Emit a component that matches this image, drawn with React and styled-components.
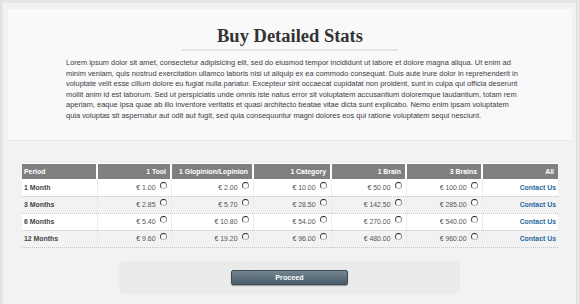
import React from 'react';
import styled, { createGlobalStyle } from 'styled-components';

const Global = createGlobalStyle`
  html, body { margin: 0; padding: 0; }
  body {
    background-color: #e4e4e4;
    background-image: repeating-linear-gradient(90deg, #dfdfdf 0 1px, #e8e8e8 1px 3px);
    font-family: "Liberation Sans", Arial, sans-serif;
  }
`;

const Page = styled.div`
  width: 580px;
  height: 304px;
  box-sizing: border-box;
  padding: 3px 4px 0 3px;
  overflow: hidden;
`;

const Wrap = styled.div`
  background: #f2f2f2;
  height: 100%;
  box-sizing: border-box;
  padding: 6px 4px 0 5px;
`;

const Intro = styled.section`
  background: #f9f9f9;
  height: 132px;
  box-sizing: border-box;
  border-bottom: 1px dotted #d8d8d8;
  padding-top: 16px;
  text-align: center;
`;

const Title = styled.h1`
  display: inline-block;
  margin: 0;
  padding: 0 35px 2px;
  font-family: "Liberation Serif", Georgia, serif;
  font-weight: bold;
  font-size: 18.5px;
  line-height: 22px;
  color: #333;
  border-bottom: 2px solid #e6e6e6;
`;

const Lead = styled.p`
  margin: 7px 0 0 58px;
  width: 456px;
  text-align: left;
  font-size: 7.45px;
  line-height: 10.5px;
  color: #404046;
  white-space: nowrap;
`;

const Table = styled.table`
  margin: 22px 0 0 14px;
  width: 536px;
  border-collapse: collapse;
  table-layout: fixed;
  font-size: 6.9px;
`;

const Col = styled.col`
  width: ${p => p.$w}px;
`;

const Th = styled.th`
  height: 15px;
  padding: 0 4px 0 ${p => (p.$first ? 2 : 4)}px;
  background: #7f7f7f;
  color: #fff;
  font-weight: bold;
  text-align: ${p => (p.$first ? 'left' : 'right')};
  border-left: ${p => (p.$first ? 'none' : '2px solid #fff')};
  border-top: 1px solid #fff;
  white-space: nowrap;
`;

const Tr = styled.tr`
  height: 17px;
  background: ${p => (p.$white ? '#fff' : 'transparent')};
`;

const Td = styled.td`
  padding: 0 ${p => (p.$link ? 2 : 4)}px 0 ${p => (p.$first ? 2 : 4)}px;
  border-bottom: 1px dotted #c4c4c4;
  border-left: ${p => (p.$first ? 'none' : '1px solid #ececec')};
  text-align: ${p => (p.$first ? 'left' : 'right')};
  color: ${p => (p.$first ? '#444' : '#555')};
  font-weight: ${p => (p.$first ? 'bold' : 'normal')};
  white-space: nowrap;
`;

const Radio = styled.span`
  display: inline-block;
  width: 5px;
  height: 5px;
  margin-left: 4px;
  border: 1px solid;
  border-color: #222 #888 #bbb #444;
  border-radius: 50%;
  background: #fff;
  vertical-align: text-top;
  position: relative;
  top: -2px;
`;

const Link = styled.a`
  color: #2467a0;
  font-weight: bold;
  text-decoration: none;
`;

const Panel = styled.div`
  margin: 13px 0 0 111px;
  width: 341px;
  height: 33px;
  box-sizing: border-box;
  padding-top: 9px;
  background: #ebebeb;
  border-radius: 5px;
`;

const Button = styled.button`
  display: block;
  margin: 0 auto;
  width: 117px;
  height: 15px;
  padding: 0;
  background: linear-gradient(#72858f, #4a5d6b);
  border: 1px solid #3c4b56;
  border-radius: 2px;
  box-shadow: 0 1px 1px rgba(0, 0, 0, 0.35);
  color: #fff;
  font-family: "Liberation Sans", Arial, sans-serif;
  font-weight: bold;
  font-size: 7.2px;
`;

const cols = [75, 74, 82, 78, 75, 76, 76];
const heads = ['Period', '1 Tool', '1 Glopinion/Lopinion', '1 Category', '1 Brain', '3 Brains', 'All'];
const rows = [
  ['1 Month', ['1.00', '2.00', '10.00', '50.00', '100.00']],
  ['3 Months', ['2.85', '5.70', '28.50', '142.50', '285.00']],
  ['6 Months', ['5.40', '10.80', '54.00', '270.00', '540.00']],
  ['12 Months', ['9.60', '19.20', '96.00', '480.00', '960.00']],
];

const lines = [
  'Lorem ipsum dolor sit amet, consectetur adipisicing elit, sed do eiusmod tempor incididunt ut labore et dolore magna aliqua. Ut enim ad',
  'minim veniam, quis nostrud exercitation ullamco laboris nisi ut aliquip ex ea commodo consequat. Duis aute irure dolor in reprehenderit in',
  'voluptate velit esse cillum dolore eu fugiat nulla pariatur. Excepteur sint occaecat cupidatat non proident, sunt in culpa qui officia deserunt',
  'mollit anim id est laborum. Sed ut perspiciatis unde omnis iste natus error sit voluptatem accusantium doloremque laudantium, totam rem',
  'aperiam, eaque ipsa quae ab illo inventore veritatis et quasi architecto beatae vitae dicta sunt explicabo. Nemo enim ipsam voluptatem',
  'quia voluptas sit aspernatur aut odit aut fugit, sed quia consequuntur magni dolores eos qui ratione voluptatem sequi nesciunt.',
];

export default function App() {
  return (
    <Page>
      <Global />
      <Wrap>
        <Intro>
          <Title>Buy Detailed Stats</Title>
          <Lead>
            {lines.map((l, i) => (
              <React.Fragment key={i}>
                {l}
                {i < lines.length - 1 && <br />}
              </React.Fragment>
            ))}
          </Lead>
        </Intro>
        <Table>
          <colgroup>
            {cols.map((w, i) => (
              <Col key={i} $w={w} />
            ))}
          </colgroup>
          <thead>
            <tr>
              {heads.map((h, i) => (
                <Th key={h} $first={i === 0}>{h}</Th>
              ))}
            </tr>
          </thead>
          <tbody>
            {rows.map(([label, prices], r) => (
              <Tr key={label} $white={r % 2 === 0}>
                <Td $first>{label}</Td>
                {prices.map(p => (
                  <Td key={p}>
                    € {p}
                    <Radio />
                  </Td>
                ))}
                <Td $link>
                  <Link href="#">Contact Us</Link>
                </Td>
              </Tr>
            ))}
          </tbody>
        </Table>
        <Panel>
          <Button>Proceed</Button>
        </Panel>
      </Wrap>
    </Page>
  );
}
